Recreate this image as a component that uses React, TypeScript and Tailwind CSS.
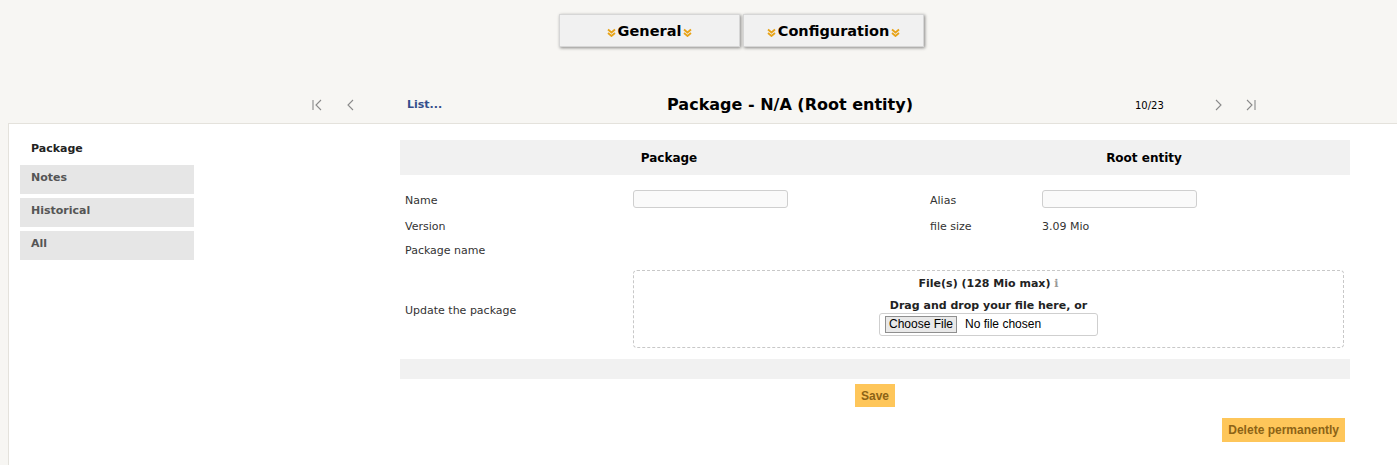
const Chevrons = () => (
  <svg width="9" height="9" viewBox="0 0 9 9" className="inline-block">
    <path d="M1 1.5 L4.5 4.5 L8 1.5" fill="none" stroke="#e8a317" strokeWidth="1.8" />
    <path d="M1 5 L4.5 8 L8 5" fill="none" stroke="#e8a317" strokeWidth="1.8" />
  </svg>
);

const NavIcon = ({ kind }: { kind: "first" | "prev" | "next" | "last" }) => {
  const paths: Record<string, string> = {
    first: "M2 1 V11 M10 1 L5 6 L10 11",
    prev: "M8 1 L3 6 L8 11",
    next: "M4 1 L9 6 L4 11",
    last: "M10 1 V11 M2 1 L7 6 L2 11",
  };
  return (
    <svg width="12" height="12" viewBox="0 0 12 12">
      <path d={paths[kind]} fill="none" stroke="#8a8a8a" strokeWidth="1.1" />
    </svg>
  );
};

const MenuButton = ({ label }: { label: string }) => (
  <button className="flex h-[33px] w-[181px] items-center justify-center gap-[2px] border border-[#d6d6d6] bg-[#f1f1f1] pt-[3px] text-[14.5px] font-bold text-black shadow-[1px_1px_3px_rgba(0,0,0,0.45)]">
    <Chevrons />
    {label}
    <Chevrons />
  </button>
);

const tabs = ["Notes", "Historical", "All"];

export default function App() {
  return (
    <div className="flex min-h-screen flex-col bg-[#f7f6f3] font-['DejaVu_Sans',Verdana,sans-serif] text-[11px] text-[#333]">
      {/* Main menu */}
      <nav className="flex justify-center gap-[3px] pl-[86px] pt-[14px]">
        <MenuButton label="General" />
        <MenuButton label="Configuration" />
      </nav>

      {/* Record navigation */}
      <div className="mt-[40px] flex h-[36px] items-center pl-[311px]">
        <NavIcon kind="first" />
        <span className="ml-[22px]">
          <NavIcon kind="prev" />
        </span>
        <a className="ml-[50px] w-[53px] font-bold text-[#334e8c]">List...</a>
        <h1 className="w-[660px] text-center text-[16px] font-bold text-black">
          Package - N/A (Root entity)
        </h1>
        <span className="ml-[15px] w-[30px] text-[10px] text-black">10/23</span>
        <span className="ml-[47px]">
          <NavIcon kind="next" />
        </span>
        <span className="ml-[21px]">
          <NavIcon kind="last" />
        </span>
      </div>

      {/* Content panel */}
      <div className="ml-[8px] flex flex-1 border-l border-t border-[#e4e2dc] bg-white">
        <aside className="flex w-[186px] flex-col pl-[11px] pt-[10px]">
          <div className="h-[29px] px-[11px] pt-[7px] font-bold text-[#222]">Package</div>
          <div className="mt-[2px] flex flex-col gap-[4px]">
            {tabs.map((t) => (
              <div key={t} className="h-[29px] w-[174px] bg-[#e6e6e6] px-[11px] pt-[5px] font-bold text-[#555]">
                {t}
              </div>
            ))}
          </div>
        </aside>

        <main className="ml-[205px] w-[950px] pt-[16px]">
          <div className="grid h-[35px] grid-cols-[538px_412px] items-center bg-[#f1f1f1] text-[12px] font-bold text-black">
            <div className="text-center">Package</div>
            <div className="text-center">Root entity</div>
          </div>

          <div className="mt-[11px] grid grid-cols-[228px_297px_112px_313px]">
            <div className="flex h-[26px] items-center pl-[5px] pt-[4px]">Name</div>
            <div className="flex h-[26px] items-center pl-[5px]">
              <input className="h-[18px] w-[155px] rounded-[3px] border border-[#cfcfcf] bg-[#fafafa]" />
            </div>
            <div className="flex h-[26px] items-center pl-[5px] pt-[4px]">Alias</div>
            <div className="flex h-[26px] items-center pl-[5px]">
              <input className="h-[18px] w-[155px] rounded-[3px] border border-[#cfcfcf] bg-[#fafafa]" />
            </div>

            <div className="flex h-[26px] items-center pl-[5px] pt-[4px]">Version</div>
            <div />
            <div className="flex h-[26px] items-center pl-[5px] pt-[4px]">file size</div>
            <div className="flex h-[26px] items-center pl-[5px] pt-[4px]">3.09 Mio</div>

            <div className="col-span-4 flex h-[22px] items-center pl-[5px] pt-[4px]">Package name</div>

            <div className="mt-[10px] flex items-center pl-[5px] pt-[4px]">Update the package</div>
            <div className="col-span-3 mt-[10px] pl-[5px] pr-[6px]">
              <div className="flex h-[78px] flex-col items-center rounded-[4px] border border-dashed border-[#c8c8c8] pt-[5px] font-bold text-[#222]">
                <div>
                  File(s) (128 Mio max) <span className="text-[#999]">ℹ</span>
                </div>
                <div className="mt-[6px] leading-[14px]">Drag and drop your file here, or</div>
                <div className="flex h-[23px] w-[219px] items-center gap-[8px] rounded-[3px] border border-[#cfcfcf] px-[5px] font-['Liberation_Sans',Arial,sans-serif] text-[12px] font-normal text-black">
                  <span className="flex h-[17px] items-center border border-[#8f8f8f] bg-[#e9e9e9] px-[3px]">
                    Choose File
                  </span>
                  <span>No file chosen</span>
                </div>
              </div>
            </div>
          </div>

          <div className="mt-[11px] h-[20px] bg-[#f1f1f1]" />

          <div className="mt-[5px] flex justify-center">
            <button className="h-[23px] bg-[#fec65a] px-[6px] font-['Liberation_Sans',Arial,sans-serif] text-[12px] font-bold text-[#8c6316]">
              Save
            </button>
          </div>

          <div className="mt-[11px] flex justify-end pr-[5px]">
            <button className="h-[24px] bg-[#fec65a] px-[6px] font-['Liberation_Sans',Arial,sans-serif] text-[12px] font-bold text-[#8c6316]">
              Delete permanently
            </button>
          </div>
        </main>
      </div>
    </div>
  );
}
